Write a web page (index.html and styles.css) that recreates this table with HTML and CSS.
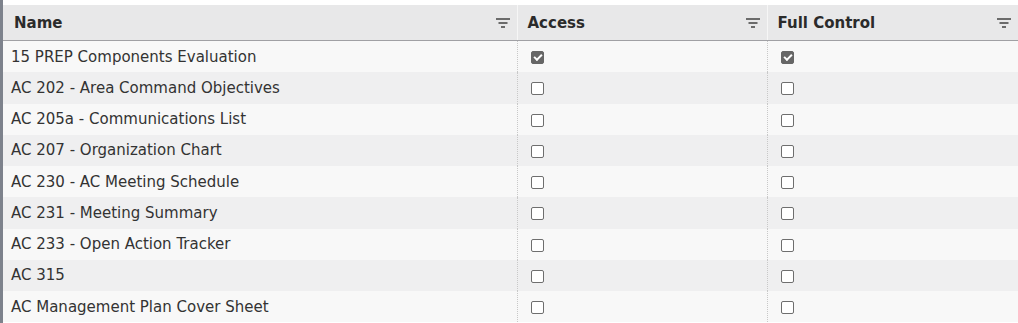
FILE: index.html
```html
<!DOCTYPE html>
<html>
<head>
<meta charset="utf-8">
<link rel="stylesheet" href="styles.css">
</head>
<body>
<div class="grid-wrap">
  <table class="grid">
    <colgroup><col class="c-name"><col class="c-acc"><col class="c-full"></colgroup>
    <thead>
      <tr>
        <th><div class="th-in"><span class="th-name">Name</span><svg class="filter" viewBox="0 0 14 10"><rect x="0" y="0" width="14" height="2"/><rect x="2.5" y="4" width="9" height="2"/><rect x="5" y="8" width="4" height="2"/></svg></div></th>
        <th><div class="th-in"><span class="th-name">Access</span><svg class="filter" viewBox="0 0 14 10"><rect x="0" y="0" width="14" height="2"/><rect x="2.5" y="4" width="9" height="2"/><rect x="5" y="8" width="4" height="2"/></svg></div></th>
        <th><div class="th-in"><span class="th-name">Full Control</span><svg class="filter" viewBox="0 0 14 10"><rect x="0" y="0" width="14" height="2"/><rect x="2.5" y="4" width="9" height="2"/><rect x="5" y="8" width="4" height="2"/></svg></div></th>
      </tr>
    </thead>
    <tbody>
      <tr><td>15 PREP Components Evaluation</td><td><span class="cb on"></span></td><td><span class="cb on"></span></td></tr>
      <tr><td>AC 202 - Area Command Objectives</td><td><span class="cb"></span></td><td><span class="cb"></span></td></tr>
      <tr><td>AC 205a - Communications List</td><td><span class="cb"></span></td><td><span class="cb"></span></td></tr>
      <tr><td>AC 207 - Organization Chart</td><td><span class="cb"></span></td><td><span class="cb"></span></td></tr>
      <tr><td>AC 230 - AC Meeting Schedule</td><td><span class="cb"></span></td><td><span class="cb"></span></td></tr>
      <tr><td>AC 231 - Meeting Summary</td><td><span class="cb"></span></td><td><span class="cb"></span></td></tr>
      <tr><td>AC 233 - Open Action Tracker</td><td><span class="cb"></span></td><td><span class="cb"></span></td></tr>
      <tr><td>AC 315</td><td><span class="cb"></span></td><td><span class="cb"></span></td></tr>
      <tr><td>AC Management Plan Cover Sheet</td><td><span class="cb"></span></td><td><span class="cb"></span></td></tr>
    </tbody>
  </table>
</div>
</body>
</html>
```
FILE: styles.css
```css
html, body {
  margin: 0;
  padding: 0;
  background: #ffffff;
}
body {
  font-family: "DejaVu Sans", Verdana, sans-serif;
  font-size: 15px;
  color: #333333;
}
.grid-wrap {
  width: 1015px;
  border-left: 3px solid #7d828c;
  padding-top: 5px;
  height: 318px;
  overflow: hidden;
}
.grid {
  width: 1015px;
  border-collapse: collapse;
  table-layout: fixed;
}
.c-name { width: 514px; }
.c-acc { width: 250px; }
.c-full { width: 251px; }
.grid th {
  background: #e8e8e9;
  height: 34px;
  padding: 1px 0 0 0;
  text-align: left;
  border-bottom: 1px solid #a0a0a4;
  border-right: 1px solid #f6f6f6;
}
.th-in {
  display: flex;
  align-items: center;
  justify-content: space-between;
  padding: 0 7px 0 10px;
}
.grid th:first-child .th-in { padding-left: 11px; }
.th-name {
  font-weight: bold;
  font-size: 15px;
  color: #2b2b2b;
}
.filter {
  width: 14px;
  height: 10px;
  fill: #6b6b6b;
}
.grid td {
  height: 31.25px;
  padding: 0 0 0 8px;
  border-right: 1px dotted #c8c8c8;
  white-space: nowrap;
  vertical-align: middle;
}
.grid td + td { padding-left: 13px; }
.grid tbody tr:nth-child(odd) td { background: #f8f8f8; }
.grid tbody tr:nth-child(even) td { background: #efeff0; }
.cb {
  display: block;
  width: 11px;
  height: 11px;
  border: 1px solid #6e6e6e;
  border-radius: 2px;
  background: #ffffff;
  position: relative;
  top: 1px;
}
.cb.on {
  background: #666666;
  border-color: #666666;
}
.cb.on::after {
  content: "";
  position: absolute;
  top: 2px;
  left: 2px;
  width: 6px;
  height: 3px;
  border-left: 2px solid #ffffff;
  border-bottom: 2px solid #ffffff;
  transform: rotate(-45deg);
}
```
